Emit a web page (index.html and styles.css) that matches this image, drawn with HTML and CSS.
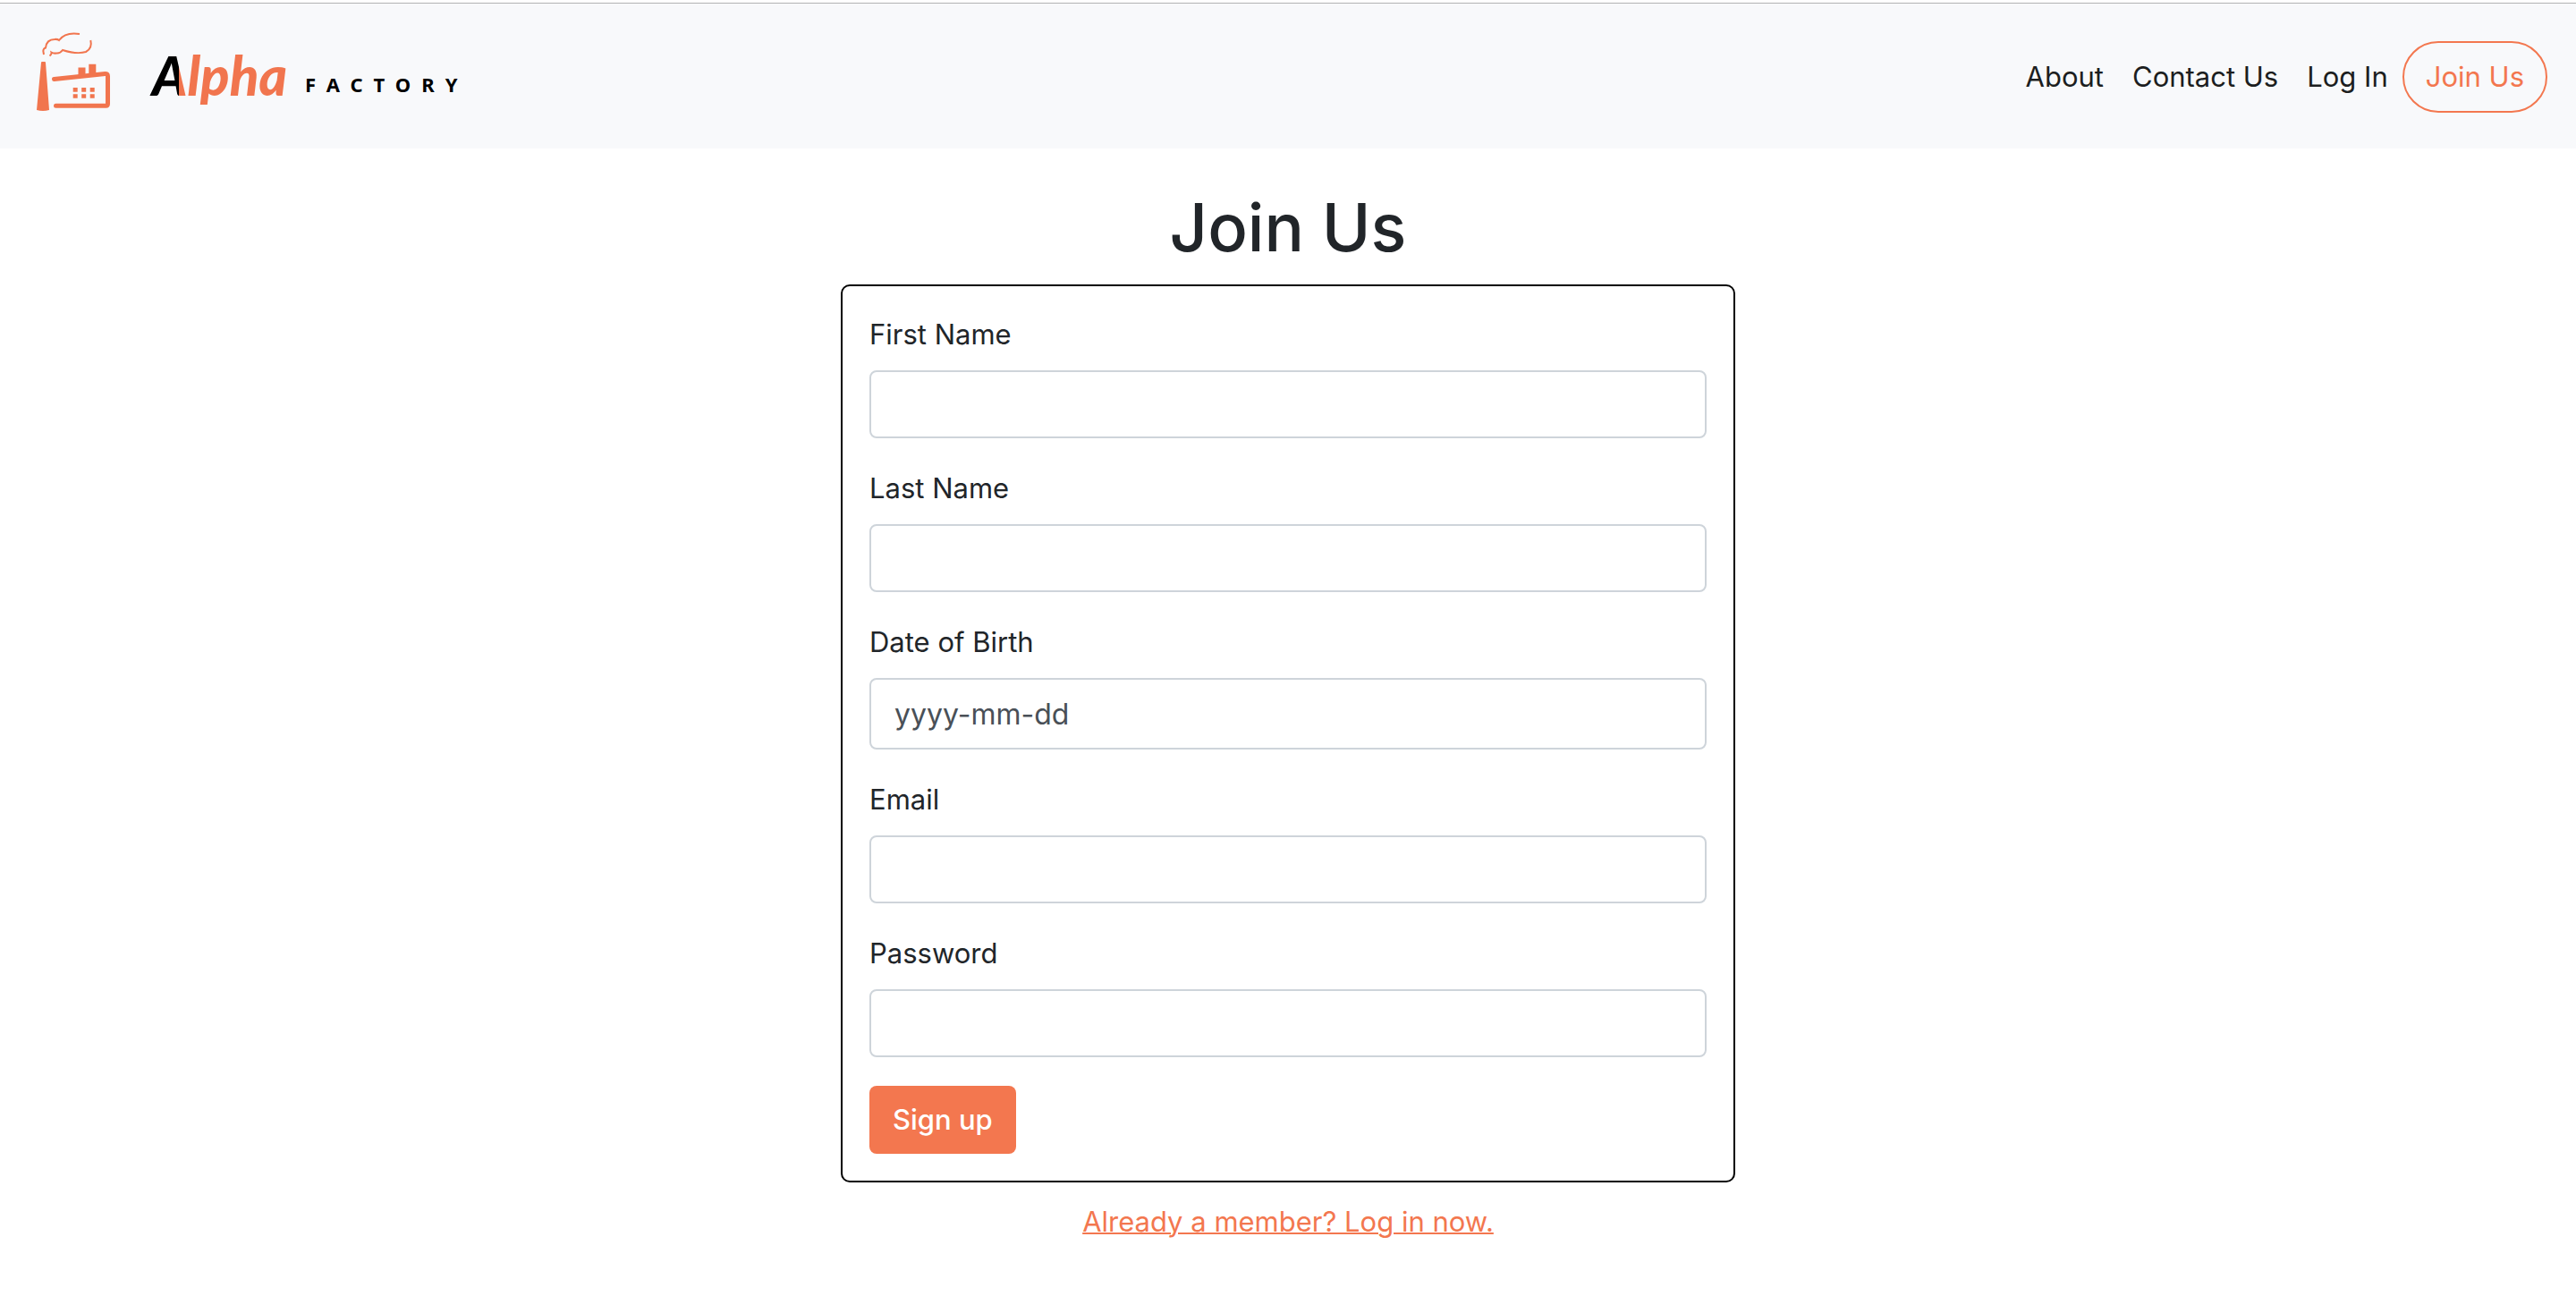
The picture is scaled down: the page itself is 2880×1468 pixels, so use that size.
FILE: index.html
```html
<!DOCTYPE html>
<html lang="en">
<head>
  <meta charset="utf-8">
  <meta name="viewport" content="width=device-width, initial-scale=1">
  <title>Join Us | Alpha Factory</title>
  <link rel="stylesheet" href="styles.css">
</head>
<body>
  <header class="navbar">
    <a class="brand" href="#" aria-label="Alpha Factory home">
      <svg class="brand-logo" viewBox="24 22 512 128" width="512" height="128">
        <defs>
          <linearGradient id="alpha-tone" gradientUnits="userSpaceOnUse" x1="170" y1="90" x2="330" y2="90">
            <stop offset="0.19" stop-color="#000"/>
            <stop offset="0.19" stop-color="#f1754e"/>
          </linearGradient>
        </defs>
        <!-- smoke -->
        <g fill="none" stroke="#f1754e" stroke-width="2">
          <path d="M49 61L48.300 57Q48.500 54 51 53.500Q52 44 61 44Q64 43.500 66 45Q73 35.500 89 38"/>
          <path d="M101.300 45Q103.500 54 96 58Q86 61 70 56Q67 60 63 59.500Q60 60 57.500 58.500Q58 60.500 55.500 62.500"/>
        </g>
        <!-- factory building -->
        <path fill="#f1754e" d="M46 70Q46 69 47 69H50Q51 69 51 70L55 123Q48 125 41 123Z"/>
        <path fill="none" stroke="#f1754e" stroke-width="5" stroke-linecap="round" stroke-linejoin="round" d="M60.500 88.500L117.500 82.500Q120.500 82.300 120.500 85V116Q120.500 118.300 118.500 118.300H62.500"/>
        <path fill="#f1754e" d="M87.500 75.500h8v9h-8zM99.300 71.700h8v12h-8zM81.700 98h5v4.700h-5zM91.200 98h5v4.700h-5zM100.700 98h5v4.700h-5zM81.700 105.300h5v4.400h-5zM91.200 105.300h5v4.400h-5zM100.700 105.300h5v4.400h-5z"/>
        <text class="logo-alpha" x="170" y="107" fill="url(#alpha-tone)">Alpha</text>
        <text class="logo-factory" x="341" y="103">FACTORY</text>
      </svg>
    </a>
    <nav class="nav" aria-label="Main">
      <a class="nav-link" href="#">About</a>
      <a class="nav-link" href="#">Contact Us</a>
      <a class="nav-link" href="#">Log In</a>
      <a class="nav-join" href="#">Join Us</a>
    </nav>
  </header>

  <main class="page">
    <h1 class="title">Join Us</h1>
    <form class="signup">
      <div class="field">
        <label class="label" for="first-name">First Name</label>
        <input class="input" id="first-name" type="text">
      </div>
      <div class="field">
        <label class="label" for="last-name">Last Name</label>
        <input class="input" id="last-name" type="text">
      </div>
      <div class="field">
        <label class="label" for="birth-date">Date of Birth</label>
        <input class="input input-date" id="birth-date" type="text" placeholder="yyyy-mm-dd">
      </div>
      <div class="field">
        <label class="label" for="email">Email</label>
        <input class="input" id="email" type="email">
      </div>
      <div class="field">
        <label class="label" for="password">Password</label>
        <input class="input" id="password" type="password">
      </div>
      <button class="submit" type="submit">Sign up</button>
    </form>
    <a class="login-link" href="#">Already a member? Log in now.</a>
  </main>
</body>
</html>
```
FILE: styles.css
```css
*,
*::before,
*::after {
  box-sizing: border-box;
}

body {
  margin: 0;
  padding-top: 3px;
  background: #fff;
  color: #212529;
  font-family: Inter, "Liberation Sans", sans-serif;
  font-size: 31px;
  line-height: 48px;
}

.navbar {
  display: flex;
  align-items: center;
  justify-content: space-between;
  padding: 18px 32px 16px 24px;
  border-top: 1px solid #b3b3b3;
  background: #f8f9fb;
}

.brand,
.brand-logo {
  display: block;
}

.logo-alpha {
  font-family: Lato, sans-serif;
  font-size: 60px;
  font-style: italic;
  font-weight: 900;
}

.logo-factory {
  font-family: "Noto Sans", sans-serif;
  font-size: 22px;
  font-weight: 700;
  letter-spacing: 12px;
}

.nav {
  display: flex;
  align-items: center;
}

.nav-link {
  padding: 16px;
  color: #1c1e20;
  text-decoration: none;
}

.nav-join {
  padding: 14px 24px;
  border: 2px solid #f3774f;
  border-radius: 40px;
  color: #f3774f;
  text-decoration: none;
}

.page {
  display: flex;
  flex-direction: column;
  align-items: center;
  padding: 40px 32px;
}

.title {
  margin: 0 0 16px;
  font-size: 74px;
  font-weight: 500;
  line-height: 96px;
}

.signup {
  width: 100%;
  max-width: 1000px;
  padding: 30px;
  border: 2px solid #000;
  border-radius: 10px;
}

.field {
  display: flex;
  flex-direction: column;
  gap: 16px;
  margin-bottom: 32px;
}

.input {
  width: 100%;
  height: 76px;
  padding: 12px 26px;
  border: 2px solid #ced4da;
  border-radius: 8px;
  background: #fff;
  color: #495057;
  font: inherit;
}

.input-date {
  height: 80px;
  font-size: 32px;
}

.input::placeholder {
  color: #495057;
  opacity: 1;
}

.submit {
  display: block;
  padding: 14px 26px;
  border: 0;
  border-radius: 8px;
  background: #f3774f;
  color: #fff;
  font: inherit;
  font-weight: 500;
}

.login-link {
  margin-top: 20px;
  color: #f3774f;
  text-decoration: underline;
  text-decoration-thickness: 2px;
}
```
